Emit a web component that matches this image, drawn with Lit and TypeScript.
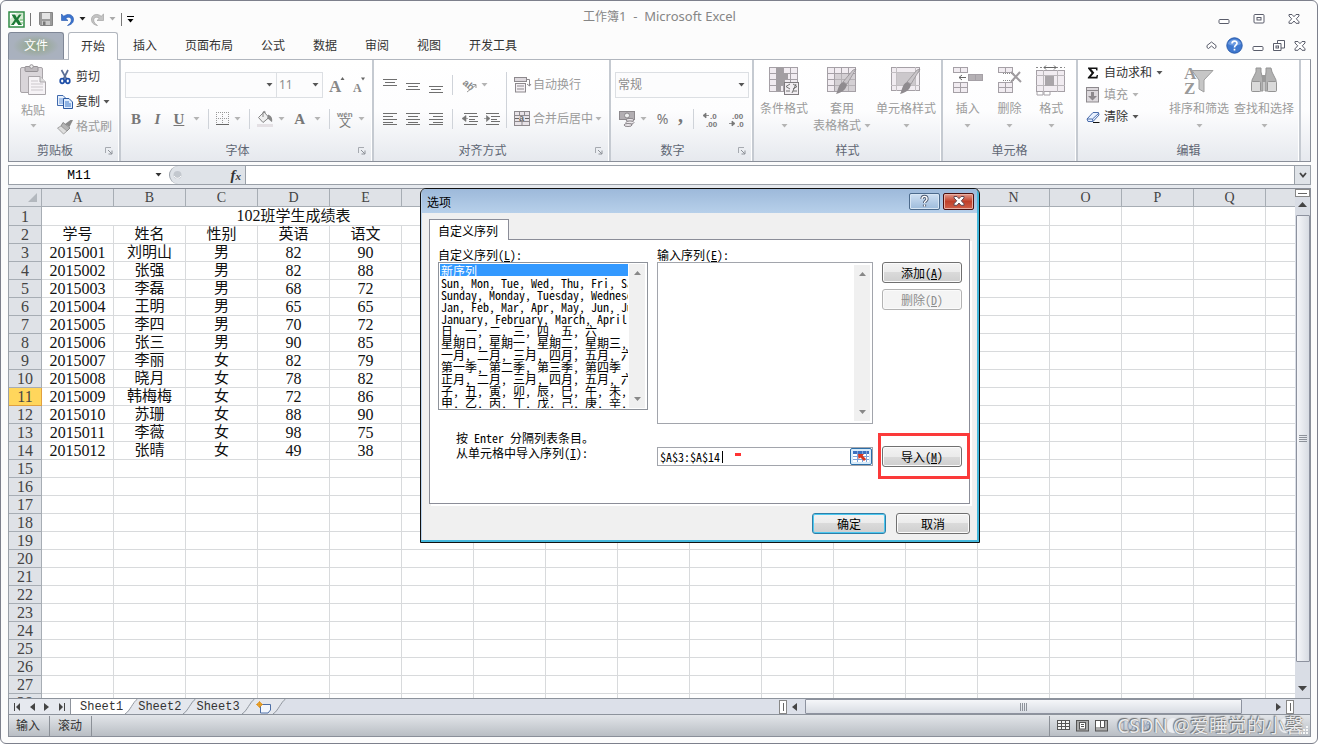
import { LitElement, html, css, svg, TemplateResult } from "lit";
import { customElement } from "lit/decorators.js";
import { classMap } from "lit/directives/class-map.js";

const ic = (w: number, h: number, body: TemplateResult) =>
  html`<svg width=${w} height=${h} viewBox="0 0 ${w} ${h}" aria-hidden="true">${body}</svg>`;

const down = (color = "#b4b4b4") =>
  ic(7, 4, svg`<path d="M0.5 0H6.5L3.5 3.5Z" fill=${color} />`);

const bars = (rows: number[][]) =>
  svg`${rows.map(([x, y, w]) => svg`<rect x=${x} y=${y} width=${w} height="1" fill="#6f6f6f" />`)}`;

const cells = (x: number, y: number, cols: number, rows: number, cw: number, ch: number, fill = "#f1ecf1") =>
  svg`${Array.from({ length: cols * rows }, (_, i) => svg`<rect x=${x + (i % cols) * cw + 0.5}
    y=${y + Math.floor(i / cols) * ch + 0.5} width=${cw} height=${ch} fill=${fill} stroke="#a5a0a6" />`)}`;

const brush = svg`<path d="M30 3L21 18L17 16L27 4Z" fill="#c9c5c9" stroke="#8e8a8e" stroke-width="0.7" />
  <path d="M17 16L21 18.5C20 24 15 27 10 28C12 25 12 18 17 16Z" fill="#8f8b8f" />`;

const icons = {
  excel: ic(17, 17, svg`<rect x="1" y="1" width="15" height="15" fill="#fff" stroke="#2f8a44" stroke-width="1.5" />
    <path d="M2 15V8L9 2H15V9Z" fill="#d6ecd2" /><path d="M3.5 3.5H7L8.8 6.8L11 3.5H13.6L10.2 8.3L14 14H10.3L8 10.4L5.8 14H3L6.7 8.7Z" fill="#1d7a37" />
    <path d="M12 12H15M12 9H15" stroke="#5fae63" />`),
  save: ic(14, 14, svg`<path d="M0.5 0.5H13.5V13.5H1.5L0.5 12.5Z" fill="#9b9b9b" stroke="#858585" /><rect x="3" y="1" width="8" height="6" fill="#e4e4e4" />
    <rect x="3" y="9" width="8" height="4" fill="#c9c9c9" /><rect x="4" y="9.5" width="2.5" height="3.5" fill="#777" />`),
  undo: ic(13, 13, svg`<path d="M0.5 1V7.5H7L4.8 5.4C7 3.6 10.3 4 10.3 7C10.3 9.3 8.8 11 6.5 12.5C10.6 11.8 12.7 9.5 12.5 6C12.2 1.4 6.6 0 2.8 3.3Z" fill="#3c74cf" stroke="#2456ab" stroke-width="0.6" />`),
  redo: ic(13, 13, svg`<path d="M12.5 1V7.5H6L8.2 5.4C6 3.6 2.7 4 2.7 7C2.7 9.3 4.2 11 6.5 12.5C2.4 11.8 0.3 9.5 0.5 6C0.8 1.4 6.4 0 10.2 3.3Z" fill="#c4c4c4" stroke="#999" stroke-width="0.6" />`),
  customize: ic(7, 7, svg`<rect width="7" height="1" fill="#000" /><path d="M0.5 3H6.5L3.5 6.5Z" fill="#000" />`),
  min: ic(12, 12, svg`<rect x="1" y="6.5" width="10" height="4" rx="1" fill="#fff" stroke="#5a5d6b" />`),
  max: ic(12, 12, svg`<rect x="1" y="1.5" width="10" height="8.500" rx="1" fill="#fff" stroke="#5a5d6b" /><rect x="4" y="4.500" width="4" height="2.500" fill="#fff" stroke="#5a5d6b" />`),
  close: ic(12, 12, svg`<path d="M1 1.500H4L6 3.700L8 1.500H11V3L8.300 5.800L11 8.800V10.300H8L6 8L4 10.300H1V8.800L3.700 5.800L1 3Z" fill="#fff" stroke="#5a5d6b" />`),
  restore: ic(12, 12, svg`<path d="M4.500 0.500H11.500V8H4.500Z" fill="#fff" stroke="#5a5d6b" /><path d="M0.500 3.500H8V10.500H0.500Z" fill="#fff" stroke="#5a5d6b" /><rect x="3" y="6" width="2.500" height="2" fill="none" stroke="#5a5d6b" />`),
  up: ic(11, 9, svg`<path d="M1 4.500L5.500 1L10 4.500V6.500L8.500 7.500L5.500 5L2.500 7.500L1 6.500Z" fill="#fff" stroke="#5a5d6b" />`),
  help: ic(17, 17, svg`<circle cx="8.500" cy="8.500" r="7.700" fill="#3f78cf" stroke="#295bab" /><path d="M2 7C3 1 14 1 15 7C11 9 6 9 2 7Z" fill="#6d9be2" />
    <path d="M6 6.600C6 3.300 11 3.300 11 6.300C11 8.200 8.500 8.200 8.500 10.400M8.500 11.800V13.500" fill="none" stroke="#fff" stroke-width="1.700" />`),
  paste: ic(28, 32, svg`<rect x="1.500" y="3.500" width="22" height="25" rx="1.500" fill="#d9d5d9" stroke="#a8a4a8" /><rect x="6" y="2.500" width="13" height="5" rx="1" fill="#bdb9bd" stroke="#969296" />
    <circle cx="12.500" cy="2.500" r="1.800" fill="#eee" stroke="#969296" /><path d="M9.500 12.500H21L26.500 18V30.500H9.500Z" fill="#f6f3f6" stroke="#aaa6aa" /><path d="M21 12.500V18H26.500" fill="#ddd" stroke="#aaa6aa" />
    <path d="M12 17H19M12 20H24M12 23H24M12 26H24" stroke="#cbc7cb" />`),
  cut: ic(16, 16, svg`<path d="M4.500 1L9.500 10M11 1L6.500 10" stroke="#5b6f96" stroke-width="1.700" /><ellipse cx="5.200" cy="12" rx="2" ry="2.300" fill="none" stroke="#1f4fa8" stroke-width="1.700" /><ellipse cx="10.800" cy="12" rx="2" ry="2.300" fill="none" stroke="#1f4fa8" stroke-width="1.700" />`),
  copy: ic(16, 16, svg`<path d="M0.500 1.500H6L8.500 4V11.500H0.500Z" fill="#e8f1fd" stroke="#3f69ad" /><path d="M2 5H7M2 7H7M2 9H7" stroke="#6d98d8" />
    <path d="M6.500 4.500H12L15.500 8V14.500H6.500Z" fill="#e0edfd" stroke="#2d5aa3" /><path d="M8 8H12M8 10H14M8 12H14" stroke="#3f79c8" />`),
  painter: ic(16, 16, svg`<path d="M16 1L12.500 8L8 5L13.500 1Z" fill="#8a8a8a" /><path d="M6 3.500L13 9L10 12L4 7Z" fill="#b5b5b5" stroke="#8c8c8c" /><path d="M4 7L10 12L6.500 15L0.500 9Z" fill="#dedede" stroke="#a5a5a5" />`),
  growA: ic(17, 18, svg`<text x="0" y="16" class="ga">A</text><path d="M11.500 4L13.500 1L15.500 4Z" fill="#666" />`),
  shrinkA: ic(14, 18, svg`<text x="1" y="16" class="gs">A</text><path d="M9 1.500L11 4.500L13 1.500Z" fill="#666" />`),
  border: ic(14, 14, svg`<path d="M0.500 0V13M6.500 0V13M12.500 0V13M0 0.500H13M0 6.500H13" stroke="#999" stroke-dasharray="1 1" /><path d="M0 12.500H13" stroke="#666" />`),
  fill: ic(17, 17, svg`<path d="M7 1L12 6.500L6 11.500L1.500 6.500Z" fill="#efefef" stroke="#858585" /><path d="M6 6V1.500C6 0 8.500 0 8.500 1.500" fill="none" stroke="#858585" /><path d="M11 3.500C15.500 5 15.500 9 15 11C12.500 10 13 8 10 8Z" fill="#888" /><rect x="0" y="13" width="16" height="3" fill="#e4e0e4" />`),
  wen: ic(17, 17, svg`<text x="0" y="6" class="wen">wén</text><text x="2" y="16" class="wenc">文</text>`),
  alT: ic(15, 15, bars([[0, 1, 14], [2, 4, 10], [0, 7, 14]])),
  alM: ic(15, 15, bars([[0, 5, 14], [2, 8, 10], [0, 11, 14]])),
  alB: ic(15, 15, bars([[0, 8, 14], [2, 11, 10], [0, 14, 14]])),
  alL: ic(15, 15, bars([[0, 1, 14], [0, 4, 10], [0, 7, 14], [0, 10, 10], [0, 12, 14]])),
  alC: ic(15, 15, bars([[0, 1, 14], [2, 4, 10], [0, 7, 14], [2, 10, 10], [0, 12, 14]])),
  alR: ic(15, 15, bars([[0, 1, 14], [4, 4, 10], [0, 7, 14], [4, 10, 10], [0, 12, 14]])),
  orient: ic(15, 15, svg`<text x="1" y="9" class="ab" transform="rotate(40 5 6)">ab</text><path d="M5 14L14 7M10.500 6.500H14V10" fill="none" stroke="#999" />`),
  indL: ic(16, 15, svg`${bars([[2, 1, 13], [7, 4, 9], [7, 7, 6], [7, 9, 9], [2, 12, 13]])}<path d="M0 6.500L4 3.500V9.500ZM3 6.500H6" fill="#777" stroke="#777" stroke-width="0.600" />`),
  indR: ic(16, 15, svg`${bars([[2, 1, 13], [7, 4, 9], [7, 7, 6], [7, 9, 9], [2, 12, 13]])}<path d="M6 6.500L2.500 3.500V9.500ZM0 6.500H4" fill="#777" stroke="#777" stroke-width="0.600" />`),
  wrap: ic(17, 16, svg`<rect x="0.500" y="0.500" width="12" height="4" fill="#ddd8dd" stroke="#8d898d" /><rect x="1.500" y="6.500" width="10" height="8.500" fill="#f4f0f4" stroke="#8d898d" /><path d="M3 9H10M3 12H10" stroke="#8d898d" /><path d="M12.500 2.500H15.500V9L13 7M15.500 9L17 7" fill="none" stroke="#8d898d" />`),
  merge: ic(17, 16, svg`<rect x="0.500" y="0.500" width="15" height="14" fill="#e8e3e8" stroke="#8d898d" /><path d="M0 4.500H16M0 10.500H16M5.500 0V4M10.500 0V4M8 11V15" stroke="#8d898d" /><path d="M1 7.500H5M11 7.500H15" stroke="#666" /><text x="5" y="10" class="tinya">a</text>`),
  money: ic(17, 16, svg`<rect x="0.500" y="0.500" width="15" height="8" fill="#b2aeb2" stroke="#8d898d" /><circle cx="8" cy="4.500" r="2.500" fill="#eee" stroke="#8d898d" /><path d="M7 9H14V14H7Z" fill="#dcd8dc" /><ellipse cx="11" cy="9" rx="4" ry="1.600" fill="#ece8ec" stroke="#8d898d" /><ellipse cx="11" cy="11.500" rx="4" ry="1.600" fill="#ece8ec" stroke="#8d898d" /><ellipse cx="9" cy="14" rx="4" ry="1.500" fill="#ece8ec" stroke="#8d898d" />`),
  dec1: ic(16, 15, svg`<path d="M0 3.500L3 1V6ZM3 3.500H6" fill="#777" stroke="#777" stroke-width="0.800" /><text x="7" y="7" class="dec">.0</text><text x="3" y="15" class="dec">.00</text>`),
  dec2: ic(16, 15, svg`<path d="M6 11.500L3 9V14ZM0 11.500H3" fill="#777" stroke="#777" stroke-width="0.800" /><text x="3" y="7" class="dec">.00</text><text x="8" y="15" class="dec">.0</text>`),
  cond: ic(32, 30, svg`${cells(1, 1, 4, 4, 7, 6)}<path d="M8 1H15V7H20V13H17V19H13V25H8Z" fill="#a29ea2" /><rect x="16.500" y="16.500" width="14" height="12" fill="#f2eef2" stroke="#7f7b7f" /><path d="M22 18L18 20.500L22 23M18 25H22M25 18L29 20.500L25 23M25 25H29M28 18L24 27" fill="none" stroke="#666" stroke-width="0.900" />`),
  fmtTable: ic(32, 30, svg`${cells(1, 1, 4, 4, 7, 6)}<path d="M9 8H29V25H9Z" fill="#c2bec2" opacity="0.600" />${brush}`),
  cellStyle: ic(32, 30, svg`<rect x="1.500" y="1.500" width="28" height="23" fill="#f1ecf1" stroke="#a5a0a6" /><path d="M1 6.500H30M1 19.500H30M6.500 1V25M25.500 1V25" stroke="#c2bec2" /><rect x="7" y="7" width="18" height="12" fill="#ccc8cc" />${brush}`),
  insert: ic(32, 30, svg`${cells(1, 1, 2, 1, 7, 5)}${cells(1, 16, 2, 2, 7, 5)}${cells(16, 8, 2, 1, 7, 6, "#b4b0b4")}<path d="M7 11.500H14M10 9L7 11.500L10 14" fill="none" stroke="#666" />`),
  del: ic(32, 30, svg`${cells(4, 1, 2, 1, 7, 5)}${cells(4, 16, 2, 2, 7, 5)}<path d="M9 7.500H20M9 14.500H20" stroke="#888" stroke-dasharray="1 1" /><path d="M17 6L27 16M26 6L17 16" stroke="#a09ca0" stroke-width="2" />`),
  format: ic(32, 30, svg`<path d="M1 1.500H30" stroke="#888" stroke-dasharray="2 2" /><path d="M9 1.500H21M11 -0.500L9 1.500L11 3.500M19 -0.500L21 1.500L19 3.500" stroke="#666" fill="none" /><rect x="1.500" y="4.500" width="28" height="21" fill="#f1ecf1" stroke="#a5a0a6" /><path d="M1 9.500H30M1 19.500H30M8.500 4V26M22.500 4V26" stroke="#bcb8bc" /><rect x="10" y="10" width="9" height="10" fill="#a9a5a9" /><path d="M2 26V29H8V26M9 26V29H15V26" fill="#fff" stroke="#a5a0a6" />`),
  sum: ic(12, 12, svg`<path d="M1 0.500H10.500V3.500H9.300L8.800 2H4.200L7.300 5.800L4 9.800H9.200L9.800 8H11L10.500 11.500H0.800V10.500L4.600 6L1 1.600Z" fill="#111" />`),
  fillDown: ic(14, 16, svg`<rect x="0.500" y="0.500" width="12" height="14.500" fill="#dcd8dc" stroke="#8d898d" /><path d="M1 3.500H12" stroke="#8d898d" /><path d="M5 5H8V9H11L6.500 13.500L2 9H5Z" fill="#8d898d" />`),
  eraser: ic(14, 12, svg`<path d="M1 8L7 1.500H12.500L13 4L7 10.500H2Z" fill="#e9f1ff" stroke="#4a6cab" /><path d="M1 8H6.500L13 2M6.500 8L7 10.500" fill="none" stroke="#4a6cab" /><path d="M7 11.500H13.500" stroke="#111" />`),
  sort: ic(32, 30, svg`<text x="1" y="13" class="az">A</text><text x="1" y="28" class="az">Z</text><path d="M9 4.500H30L21 14V26L16 23V14Z" fill="#c6c6c6" stroke="#9e9e9e" />`),
  find: ic(32, 30, svg`<path d="M8 2H13V6L15 14V25H4V14L8 6ZM18 2H23L24 6L28 14V25H17V14L18 6Z" fill="#b2b2b2" stroke="#949494" /><rect x="14" y="9" width="4" height="7" fill="#9a9a9a" /><rect x="3.500" y="15.500" width="9" height="10" rx="1" fill="#dadada" stroke="#949494" /><rect x="19.500" y="15.500" width="9" height="10" rx="1" fill="#dadada" stroke="#949494" />`),
  launch: html`<svg class="launch" width="8" height="8" viewBox="0 0 8 8" aria-hidden="true"><path d="M0.500 6V0.500H6" fill="none" stroke="#a6aab0" /><path d="M3 3L7 7M7 3.500V7H3.500" fill="none" stroke="#8d9198" /></svg>`,
  fx: html`<i class="fx">f<small>x</small></i>`,
};

const MENU_TABS = ["插入", "页面布局", "公式", "数据", "审阅", "视图", "开发工具"];
const LETTERS = "ABCDEFGHIJKLMNOPQRSTUVWXYZ".split("");
const HEAD = ["学号", "姓名", "性别", "英语", "语文"];
const DATA: string[][] = [
  ["2015001", "刘明山", "男", "82", "90"],
  ["2015002", "张强", "男", "82", "88"],
  ["2015003", "李磊", "男", "68", "72"],
  ["2015004", "王明", "男", "65", "65"],
  ["2015005", "李四", "男", "70", "72"],
  ["2015006", "张三", "男", "90", "85"],
  ["2015007", "李丽", "女", "82", "79"],
  ["2015008", "晓月", "女", "78", "82"],
  ["2015009", "韩梅梅", "女", "72", "86"],
  ["2015010", "苏珊", "女", "88", "90"],
  ["2015011", "李薇", "女", "98", "75"],
  ["2015012", "张晴", "女", "49", "38"],
];
const ROWS: string[][] = [[], HEAD, ...DATA];
const TOTAL_ROWS = 40;

const LISTS = [
  "新序列",
  "Sun, Mon, Tue, Wed, Thu, Fri, Sat",
  "Sunday, Monday, Tuesday, Wednesday",
  "Jan, Feb, Mar, Apr, May, Jun, Jul",
  "January, February, March, April, May",
  "日, 一, 二, 三, 四, 五, 六",
  "星期日, 星期一, 星期二, 星期三, 星期四",
  "一月, 二月, 三月, 四月, 五月, 六月",
  "第一季, 第二季, 第三季, 第四季",
  "正月, 二月, 三月, 四月, 五月, 六月",
  "子, 丑, 寅, 卯, 辰, 巳, 午, 未, 申",
  "甲, 乙, 丙, 丁, 戊, 己, 庚, 辛, 壬",
];

const base = css`
  * { box-sizing: border-box; }
  svg { display: block; flex: none; overflow: visible; }
  button, select, input, textarea { font: inherit; color: inherit; margin: 0; padding: 0; border: 0; background: none; border-radius: 0; outline: none; }
`;

@customElement("excel-ribbon")
export class ExcelRibbon extends LitElement {
  static styles = [base, css`
    :host { display: flex; height: 103px; border: 1px solid #8a8f99; border-top-color: #b1b6be; background: linear-gradient(#fff 0, #fdfdfe 50%, #e6e9ee 100%); color: #333; }
    .group { display: flex; flex-direction: column; border-right: 2px solid #c5cad1; flex: none; box-shadow: inset -1px 0 #fff; }
    .body { display: flex; height: 80px; padding: 4px 4px 0; }
    .caption { display: flex; align-items: center; height: 21px; color: #606774; }
    .caption span { flex: 1; text-align: center; }
    .launch { margin: 0 6px 0 4px; }
    .g1 { width: 112px; } .g2 { width: 253px; } .g3 { width: 237px; } .g4 { width: 143px; } .g5 { width: 189px; } .g6 { width: 135px; } .g7 { width: 223px; }
    .off { color: #9b9b9b; }
    .big { display: flex; flex-direction: column; align-items: center; line-height: 17px; }
    .big svg + .lab { margin-top: 4px; }
    .lab { display: block; white-space: nowrap; }
    .arr { height: 17px; display: flex; align-items: center; justify-content: center; }
    .second { display: flex; align-items: center; gap: 3px; height: 17px; white-space: nowrap; }
    .small { display: flex; flex-direction: column; }
    .small button { display: flex; align-items: center; gap: 4px; height: 25px; white-space: nowrap; }
    .g1 .small { padding: 0 0 0 4px; }
    .g1 .small button { gap: 3px; }
    .g1 .big { width: 40px; }
    .g1 .big .lab { margin-top: 6px; }
    .g1 .arr { height: 14px; }
    .g7 .small { width: 82px; padding-left: 4px; }
    .g7 .small button { height: 22px; }
    .g7 .slot { width: 14px; display: flex; justify-content: center; }
    .rows { display: flex; flex-direction: column; }
    .row { display: flex; align-items: center; height: 34px; }
    .row button { display: flex; align-items: center; height: 22px; gap: 4px; white-space: nowrap; }
    select { appearance: none; height: 26px; border: 1px solid #dcdfe3; background: #fcfcfd url("data:image/svg+xml,%3Csvg xmlns='http://www.w3.org/2000/svg' width='7' height='4'%3E%3Cpath d='M.5 0h6L3.500 3.500z' fill='%23555'/%3E%3C/svg%3E") no-repeat right 3px center; color: #8c8c8c; padding-left: 2px; }
    .name { width: 152px; } .size { width: 47px; margin-left: -1px; } .num { width: 134px; }
    .sep { width: 1px; height: 20px; background: #cfd3d9; flex: none; }
    .tall { height: 56px; margin-top: 4px; }
    .g2 .body, .g3 .body, .g4 .body { padding-top: 8px; }
    .g5 .body, .g6 .body { padding-top: 6px; }
    .letter { font: bold 15px/20px "Liberation Serif", serif; color: #777; width: 14px; justify-content: center; }
    .ital { font-style: italic; } .und { text-decoration: underline; }
    .pct { font-size: 14px; color: #777; }
    .comma { font: bold 20px/10px "Liberation Serif", serif; color: #777; }
    .row .comma { padding-bottom: 8px; }
    .fontrow2 { justify-content: space-between; padding: 0 1px 0 4px; width: 241px; }
    .numrow2 { justify-content: space-between; padding: 0 4px; width: 134px; }
    .grow { margin-left: 6px; } .shrink { margin-left: 6px; }
    .al { width: 128px; padding-left: 5px; flex: none; }
    .al .row { gap: 8px; }
    .al .row .sep { margin: 0 1px 0 0; }
    .al .row .in { margin-right: -2px; }
    .wr { padding-left: 7px; }
    .wr .row button { gap: 2px; }
    .ga { font: bold 17px "Liberation Serif"; fill: #888; } .gs { font: bold 12px "Liberation Serif"; fill: #888; }
    .wen { font: bold 8px "Liberation Sans"; fill: #888; } .wenc { font: 12px "Noto Sans CJK SC"; fill: #777; }
    .ab { font: bold 10px "Liberation Sans"; fill: #888; } .tinya { font: bold 9px "Liberation Sans"; fill: #666; }
    .dec { font: bold 8px "Liberation Sans"; fill: #777; } .az { font: bold 17px "Liberation Serif"; fill: #999; }
    .g5 .body { padding-left: 6px; gap: 5px; }
    .g5 .big { flex: none; }
    .g6 .body { padding-left: 4px; } .g6 .big { width: 42px; }
    .g7 .body { gap: 5px; padding-top: 2px; }
    .g7 .big { padding-top: 4px; }
  `];

  private big(icon: TemplateResult, label: string) {
    return html`<button class="big off">${icon}<span class="lab">${label}</span><span class="arr">${down()}</span></button>`;
  }

  private group(cls: string, caption: string, body: TemplateResult, launcher = true) {
    return html`<section class="group ${cls}"><div class="body">${body}</div>
      <div class="caption"><span>${caption}</span>${launcher ? icons.launch : ""}</div></section>`;
  }

  render() {
    const sep = html`<span class="sep"></span>`;
    return html`
      ${this.group("g1", "剪贴板", html`
        ${this.big(icons.paste, "粘贴")}
        <div class="small">
          <button>${icons.cut}剪切</button>
          <button>${icons.copy}复制 ${down("#555")}</button>
          <button class="off">${icons.painter}格式刷</button>
        </div>`)}
      ${this.group("g2", "字体", html`<div class="rows">
        <div class="row">
          <select class="name" aria-label="字体名称"><option></option></select>
          <select class="size" aria-label="字号"><option>11</option></select>
          <button class="grow" aria-label="增大字号">${icons.growA}</button>
          <button class="shrink" aria-label="减小字号">${icons.shrinkA}</button>
        </div>
        <div class="row fontrow2">
          <button class="letter">B</button><button class="letter ital">I</button>
          <button class="letter und">U</button>${down()}${sep}
          <button aria-label="边框">${icons.border}${down()}</button>${sep}
          <button aria-label="填充颜色">${icons.fill}${down()}</button>
          <button class="letter">A</button>${down()}${sep}
          <button aria-label="拼音">${icons.wen}${down()}</button>
        </div></div>`)}
      ${this.group("g3", "对齐方式", html`
        <div class="rows al">
          <div class="row"><button aria-label="顶端对齐">${icons.alT}</button><button aria-label="垂直居中">${icons.alM}</button><button aria-label="底端对齐">${icons.alB}</button>${sep}
            <button aria-label="方向">${icons.orient}${down()}</button></div>
          <div class="row"><button aria-label="左对齐">${icons.alL}</button><button aria-label="居中">${icons.alC}</button><button aria-label="右对齐">${icons.alR}</button>${sep}
            <button class="in" aria-label="减少缩进">${icons.indL}</button><button aria-label="增加缩进">${icons.indR}</button></div>
        </div>
        <span class="sep tall"></span>
        <div class="rows wr off">
          <div class="row"><button>${icons.wrap}自动换行</button></div>
          <div class="row"><button>${icons.merge}合并后居中 ${down()}</button></div>
        </div>`)}
      ${this.group("g4", "数字", html`<div class="rows">
        <div class="row"><select class="num" aria-label="数字格式"><option>常规</option></select></div>
        <div class="row numrow2">
          <button aria-label="会计数字格式">${icons.money}${down()}</button><button class="pct">%</button><button class="comma">,</button>${sep}
          <button aria-label="增加小数位数">${icons.dec1}</button><button aria-label="减少小数位数">${icons.dec2}</button>
        </div></div>`)}
      ${this.group("g5", "样式", html`
        ${this.big(icons.cond, "条件格式")}
        <button class="big off">${icons.fmtTable}<span class="lab">套用</span><span class="second">表格格式 ${down()}</span></button>
        ${this.big(icons.cellStyle, "单元格样式")}`, false)}
      ${this.group("g6", "单元格", html`
        ${this.big(icons.insert, "插入")}${this.big(icons.del, "删除")}${this.big(icons.format, "格式")}`, false)}
      ${this.group("g7", "编辑", html`
        <div class="small">
          <button><span class="slot">${icons.sum}</span>自动求和 ${down("#555")}</button>
          <button class="off"><span class="slot">${icons.fillDown}</span>填充 ${down()}</button>
          <button><span class="slot">${icons.eraser}</span>清除 ${down("#555")}</button>
        </div>
        ${this.big(icons.sort, "排序和筛选")}${this.big(icons.find, "查找和选择")}`, false)}
    `;
  }
}

@customElement("sheet-grid")
export class SheetGrid extends LitElement {
  static styles = [base, css`
    :host { display: block; overflow: hidden; min-width: 0; background: #fff; color: #111; }
    table { table-layout: fixed; border-spacing: 0; width: 1906px; border-left: 1px solid #9aa0a8; font: 16px/17px "Liberation Serif", "Noto Sans CJK SC", serif; }
    .corner { width: 33px; } .col { width: 72px; }
    th, td { height: 18px; padding: 0; overflow: hidden; white-space: nowrap; text-align: center; font-weight: 400; border-right: 1px solid #d8dadc; border-bottom: 1px solid #d8dadc; }
    th { background: #dfe2e7; border-color: #a7adb4; color: #444; }
    thead th { font-size: 14px; }
    .cjk { font-size: 15px; }
    .cur { background: #ffd65c; border-color: #e0a040; }
    .tri { display: flex; justify-content: flex-end; padding: 0 4px 0 0; }
  `];

  render() {
    return html`<table>
      <colgroup><col class="corner" />${LETTERS.map(() => html`<col class="col" />`)}</colgroup>
      <thead><tr><th><span class="tri">${ic(9, 9, svg`<path d="M9 0V9H0Z" fill="#b3b8be" />`)}</span></th>
        ${LETTERS.map((l) => html`<th scope="col">${l}</th>`)}</tr></thead>
      <tbody>${Array.from({ length: TOTAL_ROWS }, (_, r) => html`<tr>
        <th scope="row" class=${classMap({ cur: r === 10 })}>${r + 1}</th>
        ${r === 0 ? html`<td colspan="7"><span>102<span class="cjk">班学生成绩表</span></span></td>` : ""}
        ${LETTERS.slice(r === 0 ? 7 : 0).map((_l, c) => {
          const v = r === 0 ? "" : ROWS[r]?.[c] ?? "";
          return html`<td class=${classMap({ cjk: /[^\d]/.test(v) })}>${v}</td>`;
        })}</tr>`)}</tbody>
    </table>`;
  }
}

@customElement("options-dialog")
export class OptionsDialog extends LitElement {
  static styles = [base, css`
    :host { display: block; width: 560px; border: 1px solid #111; border-radius: 6px 6px 0 0; background: #f0f0f0; box-shadow: inset -2px -2px #45b8dc, inset 1px 0 #b9d3ee; font: 12px/15px "Noto Sans CJK SC", sans-serif; font-feature-settings: "hwid"; color: #000; overflow: hidden; }
    header { display: flex; align-items: center; height: 24px; margin: 0 2px 0 1px; padding: 0 3px 0 5px; gap: 3px; background: linear-gradient(#9db9da, #b7d0ea); }
    header span { flex: 1; }
    .cap { width: 31px; height: 17px; border: 1px solid #4c6a8c; border-radius: 2px; display: grid; place-items: center; background: linear-gradient(#cfe0f3, #9dbbdb); box-shadow: inset 0 0 0 1px #d8e6f4; }
    .x { border-color: #4b1010; background: linear-gradient(#e49a8c, #c0402a 50%, #d0604a); box-shadow: inset 0 0 0 1px #e8b0a4; }
    .tab { display: block; margin: 6px 0 0 8px; width: 80px; height: 21px; border: 1px solid #8b8d98; border-bottom: 0; background: #fff; text-align: center; padding-right: 2px; position: relative; z-index: 1; }
    .page { display: grid; grid-template-columns: 210px 216px 1fr; column-gap: 9px; margin: -1px 9px 0 8px; padding: 7px 0 0 8px; height: 265px; border: 1px solid #8b8d98; background: #fff; align-content: start; box-shadow: 2px 2px #fff; }
    .page label { display: block; height: 15px; white-space: nowrap; }
    .list { display: flex; height: 148px; border: 1px solid #8f939b; padding: 1px 2px 1px 1px; }
    select { flex: 1; min-width: 0; height: 144px; overflow: hidden; appearance: none; line-height: 12px; scrollbar-width: none; }
    option { display: flex; align-items: center; height: 12px; min-height: 12px; line-height: 12px; padding: 0 1px; overflow: visible; color: #000; }
    option:checked { background: #3399ff linear-gradient(#3399ff, #3399ff); color: #fff; -webkit-text-fill-color: #fff; }
    .bar { width: 16px; flex: none; background: #f0f0f0; display: flex; flex-direction: column; justify-content: space-between; align-items: center; padding: 7px 0; margin-left: 1px; }
    .area { display: flex; height: 162px; border: 1px solid #a2a5ac; padding: 2px; }
    textarea { flex: 1; min-width: 0; resize: none; }
    .push { height: 21px; border: 1px solid #707070; border-radius: 3px; background: linear-gradient(#f3f3f3 0, #ebebeb 50%, #dadada 50%, #cfcfcf 100%); box-shadow: inset 0 0 0 1px #fbfbfb; }
    .push:disabled { color: #8d8d8d; border-color: #b3b3b3; background: #f4f4f4; }
    .side { display: flex; flex-direction: column; gap: 6px; padding-top: 15px; }
    .side .push { width: 80px; }
    .hint { padding: 6px 0 0 18px; }
    .src { display: flex; align-items: center; height: 19px; border: 1px solid #a2a5ac; margin-top: 23px; padding-left: 2px; }
    .src input { flex: none; width: 64px; line-height: 14px; }
    .caret { width: 1px; height: 12px; background: #000; margin-left: -2px; }
    .dash { width: 6px; height: 3px; background: #f33; margin: -5px auto 0 12px; }
    .pick { width: 22px; height: 17px; border: 1px solid #2c6ea8; border-radius: 2px; background: #d7ebfa; display: grid; place-items: center; }
    .ring { border: 3px solid #fb3a3a; width: 92px; height: 46px; margin: 9px 0 0 -4px; padding: 10px 1px; }
    .ring .push { width: 80px; }
    .foot { display: flex; justify-content: flex-end; gap: 10px; padding: 9px 9px 8px; }
    .foot .push { width: 74px; }
    .ok { border-color: #2f7fa8; box-shadow: inset 0 0 0 1px #4cc8f0; }
  `];

  private bar() {
    return html`<span class="bar">${ic(7, 4, svg`<path d="M0 4L3.500 0L7 4Z" fill="#888" />`)}${ic(7, 4, svg`<path d="M0 0H7L3.500 4Z" fill="#888" />`)}</span>`;
  }

  render() {
    return html`
      <header><span>选项</span>
        <button class="cap" aria-label="帮助">${ic(9, 12, svg`<path d="M2 4C2 0.500 7 0.500 7 4C7 6 4.500 6 4.500 8M4.500 9.500V11.500" fill="none" stroke="#4d5a70" stroke-width="3.200" /><path d="M2 4C2 0.500 7 0.500 7 4C7 6 4.500 6 4.500 8M4.500 9.500V11.500" fill="none" stroke="#fff" stroke-width="1.400" />`)}</button>
        <button class="cap x" aria-label="关闭">${ic(12, 10, svg`<path d="M1 0.500H4L6 2.700L8 0.500H11V2L8.300 4.800L11 7.800V9.300H8L6 7L4 9.300H1V7.800L3.700 4.800L1 2Z" fill="#fff" stroke="#5d4a55" />`)}</button>
      </header>
      <button class="tab">自定义序列</button>
      <div class="page">
        <div>
          <label for="lists">自定义序列(<u>L</u>):</label>
          <div class="list"><select id="lists" size="12">${LISTS.map((l, i) => html`<option ?selected=${i === 0}>${l}</option>`)}</select>${this.bar()}</div>
        </div>
        <div>
          <label for="entries">输入序列(<u>E</u>):</label>
          <div class="area"><textarea id="entries"></textarea>${this.bar()}</div>
        </div>
        <div class="side"><button class="push">添加(<u>A</u>)</button><button class="push" disabled>删除(<u>D</u>)</button></div>
        <div class="hint"><div>按 Enter 分隔列表条目。</div><label for="src">从单元格中导入序列(<u>I</u>):</label></div>
        <div class="src"><input id="src" value="$A$3:$A$14" /><span class="caret"></span><span class="dash"></span>
          <button class="pick" aria-label="选择区域">${ic(16, 11, svg`<rect width="16" height="11" fill="#fff" /><rect width="16" height="3" fill="#3b6fc0" /><path d="M0 5.500H16M0 8.500H16M4.500 0V11M9.500 0V11M13.500 0V11" stroke="#7fa2d8" /><path d="M5 3H11L9.500 4.500L13 8L11 10L7.500 6.500L5.500 8Z" fill="#d8351e" />`)}</button></div>
        <div class="ring"><button class="push">导入(<u>M</u>)</button></div>
      </div>
      <div class="foot"><button class="push ok">确定</button><button class="push">取消</button></div>
    `;
  }
}

@customElement("app-root")
export class AppRoot extends LitElement {
  static styles = [base, css`
    :host { display: block; height: 100vh; min-height: 560px; background: #fff; font: 12px/16px "Noto Sans", "Noto Sans CJK SC", sans-serif; color: #333; }
    .window { position: relative; display: flex; flex-direction: column; height: 100%; margin-right: 1px; border: 1px solid #7d808c; border-radius: 6px; background: #fcfcfc; padding: 0 6px 6px 7px; overflow: hidden; }
    .title { display: flex; align-items: center; height: 31px; position: relative; }
    .qat { display: flex; align-items: center; gap: 5px; padding-top: 5px; flex: 1; }
    .vs { width: 1px; height: 13px; background: #777; flex: none; }
    .undo { margin-left: 3px; }
    .name { color: #868686; white-space: pre; }
    .name span { font-size: 13px; }
    .ctl { display: flex; flex: 1; justify-content: flex-end; gap: 23px; padding-top: 4px; }
    button { display: flex; align-items: center; }
    .ctl button:last-child { margin-right: 11px; }
    .tabs { display: flex; height: 27px; }
    .tabs button { padding: 0 14px; }
    .tabs .file { color: #fff; width: 56px; justify-content: center; padding: 0; background: radial-gradient(ellipse at center, #8fa583 0, #a9b1bd 60%, #a9b1c0); border: 1px solid #7f8796; border-bottom: 0; border-radius: 3px 3px 0 0; }
    .tabs .home { margin: 0 1px -1px 4px; padding: 0 12px; border: 1px solid #b1b6be; border-bottom: 0; background: #fff; border-radius: 3px 3px 0 0; z-index: 1; position: relative; height: 28px; }
    .tools { margin-left: auto; display: flex; align-items: center; gap: 9px; padding-right: 5px; }
    .tabs .tools button { padding: 0; }
    .formula { display: flex; height: 20px; margin-top: 3px; border: 1px solid #9aa0a8; background: #fff; }
    .box { width: 160px; display: flex; align-items: center; padding-right: 7px; }
    .box input { width: 140px; text-align: center; font: 13px "Liberation Mono", monospace; color: #000; }
    .box svg { margin-left: auto; }
    .mid { width: 77px; background: #dfe3e8; border-right: 1px solid #9aa0a8; border-left: 1px solid #9aa0a8; border-radius: 9px 0 0 9px; display: flex; justify-content: space-between; align-items: center; padding: 0 4px 0 3px; }
    .fx { font: italic bold 15px/16px "Liberation Serif", serif; } .fx small { font-size: 11px; }
    .cell { flex: 1; min-width: 0; }
    .drop { width: 16px; background: #dfe3e8; border-left: 1px solid #9aa0a8; justify-content: center; }
    .strip { height: 4px; background: #e6e9ee; border-bottom: 1px solid #8a8f99; }
    .sheet { display: flex; flex: 1; min-height: 0; }
    sheet-grid { flex: 1; }
    .vbar { width: 16px; flex: none; display: flex; flex-direction: column; align-items: center; background: #d9dde5; border-right: 1px solid #8a8f99; }
    .vsplit { width: 15px; height: 8px; border: 1px solid #888; background: #fff; margin-bottom: 5px; display: grid; place-items: center; flex: none; }
    .vthumb { width: 14px; flex: 1; margin: 8px 0 24px; border: 1px solid #8d929f; border-radius: 1px; background: linear-gradient(90deg, #f5f6f9, #d8dce3); display: grid; place-items: center; }
    .vbar .dn { margin-bottom: 7px; }
    .bottom { display: flex; height: 17px; border: 1px solid #8d939c; background: #dce0e9; font: 12px/15px "Liberation Mono", monospace; }
    .nav { width: 62px; display: flex; align-items: center; justify-content: space-between; padding: 0 5px; background: #e6e9ef; border-right: 1px solid #8d939c; }
    .st { background: #e4e7ed; color: #333; white-space: nowrap; height: 15px; padding-top: 2px; }
    .st.on { background: #fff; padding-left: 9px; }
    .hbar { margin-left: auto; width: 531px; display: flex; align-items: center; min-width: 0; }
    .hs { width: 8px; height: 14px; border: 1px solid #888; background: #fff; display: grid; place-items: center; flex: none; }
    .hthumb { flex: 1; height: 15px; margin: 0 34px 0 8px; border: 1px solid #8d929f; border-radius: 1px; background: linear-gradient(#f5f6f9, #d8dce3); display: grid; place-items: center; }
    .ha { margin-left: 5px; } .hr { margin-right: 5px; }
    .hend { width: 24px; }
    .status { display: flex; align-items: center; height: 22px; border: 1px solid #8a8f99; border-top: 0; background: linear-gradient(#e2e5e9, #b9bec4); padding-left: 7px; }
    .status .vs { height: 20px; background: #8b9097; }
    .status > span { padding-right: 9px; } .status span + .vs + span { padding-left: 8px; }
    .views { margin-left: auto; display: flex; align-items: center; gap: 6px; width: 261px; }
    .views .vs { margin-right: 1px; }
    .views svg:last-child { margin: 0 1px 0 auto; align-self: flex-end; }
    .zoom { color: #8fa0b8; margin-left: 6px; }
    .round { width: 15px; height: 15px; border-radius: 8px; background: #eceef1; margin-left: 10px; }
    .round + .round { margin-left: 94px; }
    .mark { position: absolute; right: 13px; bottom: 4px; font: 19px/26px "Noto Sans", "Noto Sans CJK SC", sans-serif; color: #e9eaec; text-shadow: -1px -1px 1px #6d6d6d, 0 0 1px #666; }
    options-dialog { position: absolute; left: 419px; top: 187px; z-index: 2; }
  `];

  render() {
    const la = svg`<path d="M5 0V8L0 4Z" fill="#444" />`;
    const ra = svg`<path d="M0 0V8L5 4Z" fill="#444" />`;
    const slant = (fillL: string, fillR: string) => ic(15, 15, svg`<path d="M0 0H15L3 15H0Z" fill=${fillL} /><path d="M15 0V15H3Z" fill=${fillR} /><path d="M14.500 0C10 3 7 12 2 15" fill="none" stroke="#8d939c" />`);
    return html`<main class="window">
      <div class="title">
        <div class="qat">${icons.excel}<span class="vs"></span><button class="undo" aria-label="保存">${icons.save}</button>
          <button class="undo" aria-label="撤消">${icons.undo}</button>${down("#222")}
          <button aria-label="恢复">${icons.redo}</button>${down("#aaa")}<span class="vs"></span><button aria-label="自定义">${icons.customize}</button></div>
        <span class="name">工作簿<span>1  -  Microsoft Excel</span></span>
        <div class="ctl"><button aria-label="最小化">${icons.min}</button><button aria-label="最大化">${icons.max}</button><button aria-label="关闭">${icons.close}</button></div>
      </div>
      <nav class="tabs"><button class="file">文件</button><button class="home">开始</button>
        ${MENU_TABS.map((t) => html`<button>${t}</button>`)}
        <div class="tools"><button aria-label="折叠功能区">${icons.up}</button><button aria-label="帮助">${icons.help}</button><button aria-label="最小化窗口">${icons.min}</button><button aria-label="还原窗口">${icons.restore}</button><button aria-label="关闭窗口">${icons.close}</button></div></nav>
      <excel-ribbon></excel-ribbon>
      <div class="formula">
        <div class="box"><input aria-label="名称框" value="M11" />${down("#333")}</div>
        <div class="mid">${ic(9, 10, svg`<circle cx="4.500" cy="5" r="4" fill="#c3c8ce" /><path d="M1 6C3 9 6 9 8 6" fill="none" stroke="#fff" />`)}${icons.fx}</div>
        <input class="cell" aria-label="编辑栏" />
        <button class="drop" aria-label="展开编辑栏">${ic(8, 6, svg`<path d="M1 1L4 4.500L7 1" fill="none" stroke="#444" stroke-width="1.800" />`)}</button>
      </div>
      <div class="strip"></div>
      <div class="sheet"><sheet-grid></sheet-grid>
        <div class="vbar"><span class="vsplit">${ic(9, 1, svg`<rect width="9" height="1" fill="#666" />`)}</span>
          ${ic(9, 5, svg`<path d="M0 5H9L4.500 0Z" fill="#444" />`)}
          <span class="vthumb">${ic(8, 8, svg`<path d="M0 0.500H8M0 2.500H8M0 4.500H8M0 6.500H8" stroke="#8d929a" />`)}</span>
          <span class="dn">${ic(9, 5, svg`<path d="M0 0H9L4.500 5Z" fill="#444" />`)}</span></div></div>
      <div class="bottom">
        <div class="nav">${ic(6, 8, svg`<rect width="1" height="8" fill="#444" /><path d="M6 0V8L2 4Z" fill="#444" />`)}${ic(5, 8, la)}${ic(5, 8, ra)}${ic(6, 8, svg`<rect x="5" width="1" height="8" fill="#444" /><path d="M0 0V8L4 4Z" fill="#444" />`)}</div>
        <button class="st on">Sheet1</button>${slant("#fff", "#e4e7ed")}
        <button class="st">Sheet2</button>${slant("#e4e7ed", "#e4e7ed")}
        <button class="st">Sheet3</button>${slant("#e4e7ed", "#e4e7ed")}
        <button class="st" aria-label="插入工作表">${ic(16, 13, svg`<path d="M5.500 3.500H15.500V9L13 12H5.500Z" fill="#f2f6fd" stroke="#4d6ea5" /><circle cx="4.500" cy="3.500" r="2" fill="#ffd34d" stroke="#d8830e" /><path d="M4.500 0V7M1 3.500H8" stroke="#e0901a" stroke-width="0.800" />`)}</button>${slant("#e4e7ed", "#dce0e9")}
        <div class="hbar"><span class="hs">${ic(1, 8, svg`<rect width="1" height="8" fill="#666" />`)}</span><span class="ha">${ic(5, 8, la)}</span>
          <span class="hthumb">${ic(8, 8, svg`<path d="M0.500 0V8M2.500 0V8M4.500 0V8M6.500 0V8" stroke="#8d929a" />`)}</span>
          <span class="hr">${ic(5, 8, ra)}</span><span class="hend"><span class="hs">${ic(1, 8, svg`<rect width="1" height="8" fill="#666" />`)}</span></span></div>
      </div>
      <div class="status"><span>输入</span><i class="vs"></i><span>滚动</span><i class="vs"></i>
        <div class="views"><i class="vs"></i>
          ${ic(13, 11, svg`<rect x="0.500" y="0.500" width="12" height="9" fill="#f4f4f4" stroke="#555" /><path d="M0 3.500H13M0 6.500H13M4.500 0V10M8.500 0V10" stroke="#555" />`)}
          ${ic(13, 12, svg`<rect x="0.500" y="0.500" width="12" height="10.500" fill="#aaa" stroke="#555" /><rect x="3.500" y="2.500" width="6" height="6.500" fill="#fff" stroke="#555" /><path d="M5 4.500H8M5 6.500H8" stroke="#555" />`)}
          ${ic(13, 12, svg`<rect x="0.500" y="0.500" width="12" height="10.500" fill="#aaa" stroke="#555" /><path d="M1 1H5V7H1ZM6 1H9V7H6Z" fill="#fff" /><path d="M5.500 1V7.500H9.500V1" fill="none" stroke="#555" />`)}
          <span class="zoom">100%</span><button class="round" aria-label="缩小"></button><button class="round" aria-label="放大"></button>
          ${ic(11, 11, svg`<path d="M8 2H10M8 5H10M5 5H7M8 8H10M5 8H7M2 8H4" stroke="#f7f7f7" stroke-width="2" />`)}</div></div>
      <div class="mark">CSDN @爱睡觉的小馨</div>
      <options-dialog></options-dialog>
    </main>`;
  }
}
